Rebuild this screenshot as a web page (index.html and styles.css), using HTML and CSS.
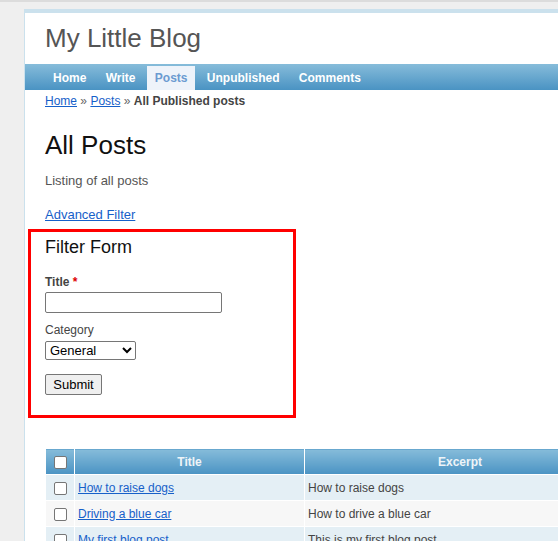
FILE: index.html
```html
<!DOCTYPE html>
<html>
<head>
<meta charset="utf-8">
<title>My Little Blog</title>
<link rel="stylesheet" href="styles.css">
</head>
<body>
<div class="page">
  <header class="site-header">
    <div class="site-title">My Little Blog</div>
  </header>
  <nav class="main-nav">
    <a class="nav-item" href="#">Home</a>
    <a class="nav-item" href="#">Write</a>
    <a class="nav-item active" href="#">Posts</a>
    <a class="nav-item" href="#">Unpublished</a>
    <a class="nav-item" href="#">Comments</a>
  </nav>
  <main class="content">
    <div class="breadcrumb"><a href="#">Home</a> <span class="sep">&raquo;</span> <a href="#">Posts</a> <span class="sep">&raquo;</span> <strong>All Published posts</strong></div>
    <h1 class="page-title">All Posts</h1>
    <p class="page-desc">Listing of all posts</p>
    <a class="adv-link" href="#">Advanced Filter</a>
    <form class="filter-form">
      <h2 class="form-title">Filter Form</h2>
      <label class="field-label bold" for="t">Title <span class="req">*</span></label>
      <input class="text-input" id="t" type="text">
      <label class="field-label cat" for="c">Category</label>
      <select class="select-input" id="c"><option>General</option></select>
      <button class="submit-btn" type="button">Submit</button>
    </form>
    <table class="grid">
      <colgroup>
        <col class="c1">
        <col class="c2">
        <col class="c3">
      </colgroup>
      <thead>
        <tr>
          <th class="col-check"><span class="cb"></span></th>
          <th>Title</th>
          <th>Excerpt</th>
        </tr>
      </thead>
      <tbody>
        <tr class="odd">
          <td class="col-check"><span class="cb"></span></td>
          <td><a href="#">How to raise dogs</a></td>
          <td>How to raise dogs</td>
        </tr>
        <tr class="even">
          <td class="col-check"><span class="cb"></span></td>
          <td><a href="#">Driving a blue car</a></td>
          <td>How to drive a blue car</td>
        </tr>
        <tr class="odd">
          <td class="col-check"><span class="cb"></span></td>
          <td><a href="#">My first blog post</a></td>
          <td>This is my first blog post</td>
        </tr>
      </tbody>
    </table>
  </main>
</div>
</body>
</html>
```

FILE: styles.css
```css
html, body {
  margin: 0;
  padding: 0;
  overflow: hidden;
}
body {
  background: #efefef;
  border-top: 2px solid #dcdcdc;
  font-family: "Liberation Sans", Arial, sans-serif;
  height: 600px;
}
.page {
  margin: 7px 0 0 24px;
  width: 600px;
  background: #fff;
  border-top: 4px solid #cbe1ed;
  border-left: 1px solid #cbe1ed;
  min-height: 600px;
}
.site-header {
  padding: 10px 20px 11px;
}
.site-title {
  font-size: 26px;
  line-height: 30px;
  color: #555;
}
.main-nav {
  display: flex;
  gap: 3.33px;
  height: 26px;
  padding-left: 20px;
  background: linear-gradient(#86bcda, #4a93c3);
}
.nav-item {
  margin-top: 2px;
  height: 24px;
  line-height: 24px;
  padding: 0 8px;
  font-size: 12px;
  font-weight: bold;
  color: #fff;
  text-decoration: none;
}
.nav-item.active {
  background: #eef3fa;
  color: #6b9bd1;
}
.content {
  padding: 0 20px;
}
a {
  color: #1660c9;
}
.breadcrumb {
  padding-top: 3px;
  font-size: 12px;
  line-height: 16px;
  color: #444;
}
.breadcrumb .sep {
  color: #666;
}
.page-title {
  margin: 21px 0 0;
  font-size: 26px;
  line-height: 30px;
  font-weight: normal;
  color: #111;
}
.page-desc {
  margin: 13px 0 0;
  font-size: 13px;
  line-height: 16px;
  color: #555;
}
.adv-link {
  display: block;
  margin-top: 18px;
  font-size: 13px;
  line-height: 16px;
  width: max-content;
}
.filter-form {
  margin: 6px 0 0 -17px;
  width: 268px;
  box-sizing: border-box;
  border: 3px solid #ff0000;
  padding: 4px 14px 20px;
  display: flex;
  flex-direction: column;
  align-items: flex-start;
}
.form-title {
  margin: 0;
  font-size: 18px;
  line-height: 22px;
  font-weight: normal;
  color: #111;
}
.field-label {
  display: block;
  margin-top: 16.5px;
  font-size: 12px;
  line-height: 15px;
  color: #444;
}
.field-label.bold {
  font-weight: bold;
}
.field-label.cat {
  margin-top: 10px;
}
.req {
  color: #d00;
}
.text-input {
  margin: 2.5px 0 0;
  width: 177px;
  height: 21px;
  box-sizing: border-box;
  border: 1px solid #767676;
  border-radius: 2px;
  padding: 1px 2px;
  font-size: 13px;
}
.select-input {
  margin: 3px 0 0;
  width: 91px;
  height: 19px;
  box-sizing: border-box;
  border: 1px solid #767676;
  border-radius: 2px;
  font-family: "Liberation Sans", Arial, sans-serif;
  font-size: 13px;
  background: #fff;
  color: #000;
  padding: 0;
}
.submit-btn {
  margin-top: 14px;
  width: 57px;
  height: 21px;
  box-sizing: border-box;
  border: 1px solid #767676;
  border-radius: 2px;
  background: #efefef;
  font-family: "Liberation Sans", Arial, sans-serif;
  font-size: 13px;
  color: #000;
  padding: 0;
}
.grid {
  margin-top: 30px;
  border-collapse: collapse;
  table-layout: fixed;
  width: 570px;
  font-size: 12px;
}
.grid col.c1 { width: 29px; }
.grid col.c2 { width: 230px; }
.grid col.c3 { width: 311px; }
.grid th, .grid td {
  border: 1px solid #fff;
  height: 25px;
  padding: 0 3px;
}
.grid th {
  background: linear-gradient(#86bcda, #4a93c3);
  color: #eef4f8;
  font-weight: bold;
  text-align: center;
}
.grid td {
  color: #444;
  text-align: left;
  white-space: nowrap;
}
.grid .col-check {
  padding: 0;
  text-align: center;
}
.grid tr.odd td {
  background: #e4eff5;
}
.grid tr.even td {
  background: #f7f7f7;
}
.cb {
  display: inline-block;
  width: 13px;
  height: 13px;
  box-sizing: border-box;
  border: 1px solid #767676;
  border-radius: 2px;
  background: #fff;
  vertical-align: middle;
}
```
